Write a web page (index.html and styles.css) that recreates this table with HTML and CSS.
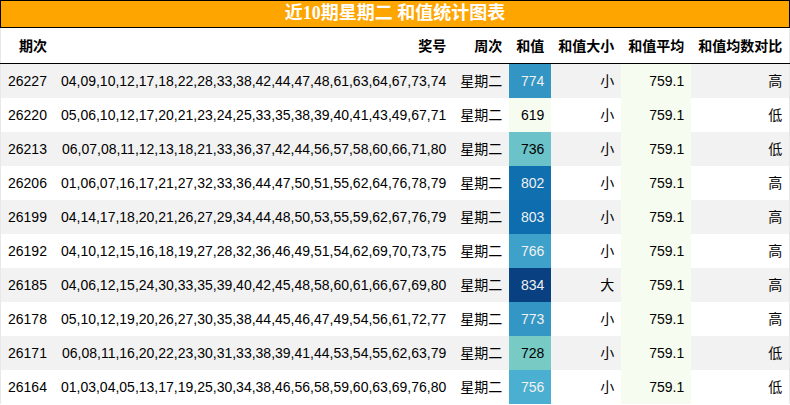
FILE: index.html
```html
<!DOCTYPE html>
<html lang="zh">
<head>
<meta charset="utf-8">
<title>近10期星期二 和值统计图表</title>
<link rel="stylesheet" href="styles.css">
</head>
<body>
<div class="page">
  <div class="title">近10期星期二 和值统计图表</div>
  <table class="stats">
    <thead>
      <tr>
        <th>期次</th><th>奖号</th><th>周次</th><th>和值</th><th>和值大小</th><th>和值平均</th><th>和值均数对比</th>
      </tr>
    </thead>
    <tbody>
      <tr class="odd"><td>26227</td><td>04,09,10,12,17,18,22,28,33,38,42,44,47,48,61,63,64,67,73,74</td><td>星期二</td><td class="sum c774">774</td><td>小</td><td class="avg">759.1</td><td>高</td></tr>
      <tr><td>26220</td><td>05,06,10,12,17,20,21,23,24,25,33,35,38,39,40,41,43,49,67,71</td><td>星期二</td><td class="sum c619">619</td><td>小</td><td class="avg">759.1</td><td>低</td></tr>
      <tr class="odd"><td>26213</td><td>06,07,08,11,12,13,18,21,33,36,37,42,44,56,57,58,60,66,71,80</td><td>星期二</td><td class="sum c736">736</td><td>小</td><td class="avg">759.1</td><td>低</td></tr>
      <tr><td>26206</td><td>01,06,07,16,17,21,27,32,33,36,44,47,50,51,55,62,64,76,78,79</td><td>星期二</td><td class="sum c802">802</td><td>小</td><td class="avg">759.1</td><td>高</td></tr>
      <tr class="odd"><td>26199</td><td>04,14,17,18,20,21,26,27,29,34,44,48,50,53,55,59,62,67,76,79</td><td>星期二</td><td class="sum c803">803</td><td>小</td><td class="avg">759.1</td><td>高</td></tr>
      <tr><td>26192</td><td>04,10,12,15,16,18,19,27,28,32,36,46,49,51,54,62,69,70,73,75</td><td>星期二</td><td class="sum c766">766</td><td>小</td><td class="avg">759.1</td><td>高</td></tr>
      <tr class="odd"><td>26185</td><td>04,06,12,15,24,30,33,35,39,40,42,45,48,58,60,61,66,67,69,80</td><td>星期二</td><td class="sum c834">834</td><td>大</td><td class="avg">759.1</td><td>高</td></tr>
      <tr><td>26178</td><td>05,10,12,19,20,26,27,30,35,38,44,45,46,47,49,54,56,61,72,77</td><td>星期二</td><td class="sum c773">773</td><td>小</td><td class="avg">759.1</td><td>高</td></tr>
      <tr class="odd"><td>26171</td><td>06,08,11,16,20,22,23,30,31,33,38,39,41,44,53,54,55,62,63,79</td><td>星期二</td><td class="sum c728">728</td><td>小</td><td class="avg">759.1</td><td>低</td></tr>
      <tr><td>26164</td><td>01,03,04,05,13,17,19,25,30,34,38,46,56,58,59,60,63,69,76,80</td><td>星期二</td><td class="sum c756">756</td><td>小</td><td class="avg">759.1</td><td>低</td></tr>
    </tbody>
  </table>
</div>
</body>
</html>
```

FILE: styles.css
```css
html, body {
  margin: 0;
  padding: 0;
  background: #ffffff;
}

.page {
  width: 790px;
  font-family: "Liberation Sans", "Noto Sans CJK SC", sans-serif;
  color: #000000;
}

.title {
  box-sizing: border-box;
  height: 28px;
  border: 1px solid #000000;
  background: #ffa500;
  color: #ffffff;
  font-family: "Liberation Serif", "Noto Sans CJK SC", serif;
  font-weight: bold;
  font-size: 18px;
  line-height: 25px;
  text-align: center;
}

.stats {
  width: 790px;
  border-collapse: collapse;
  border-left: 1px solid #e8e8e8;
  border-right: 1px solid #e8e8e8;
  font-size: 14px;
}

.stats th,
.stats td {
  padding: 0 7px;
  text-align: right;
  white-space: nowrap;
  line-height: 16px;
}

.stats th {
  height: 35px;
  font-weight: bold;
  border-bottom: 1px solid #000000;
}

.stats td {
  height: 34px;
}

.stats tr.odd td {
  background: #f2f2f2;
}

.stats td.avg,
.stats tr.odd td.avg {
  background: #f7fcf0;
}

.stats tr td.sum { color: #f1f1f1; }
.stats tr td.c619 { background: #f7fcf0; color: #000000; }
.stats tr td.c728 { background: #78cbc5; color: #000000; }
.stats tr td.c736 { background: #6bc3c9; color: #000000; }
.stats tr td.c756 { background: #4aafd1; }
.stats tr td.c766 { background: #3ea1c9; }
.stats tr td.c773 { background: #3496c4; }
.stats tr td.c774 { background: #3395c3; }
.stats tr td.c802 { background: #0f6faf; }
.stats tr td.c803 { background: #0d6daf; }
.stats tr td.c834 { background: #084081; }
```
